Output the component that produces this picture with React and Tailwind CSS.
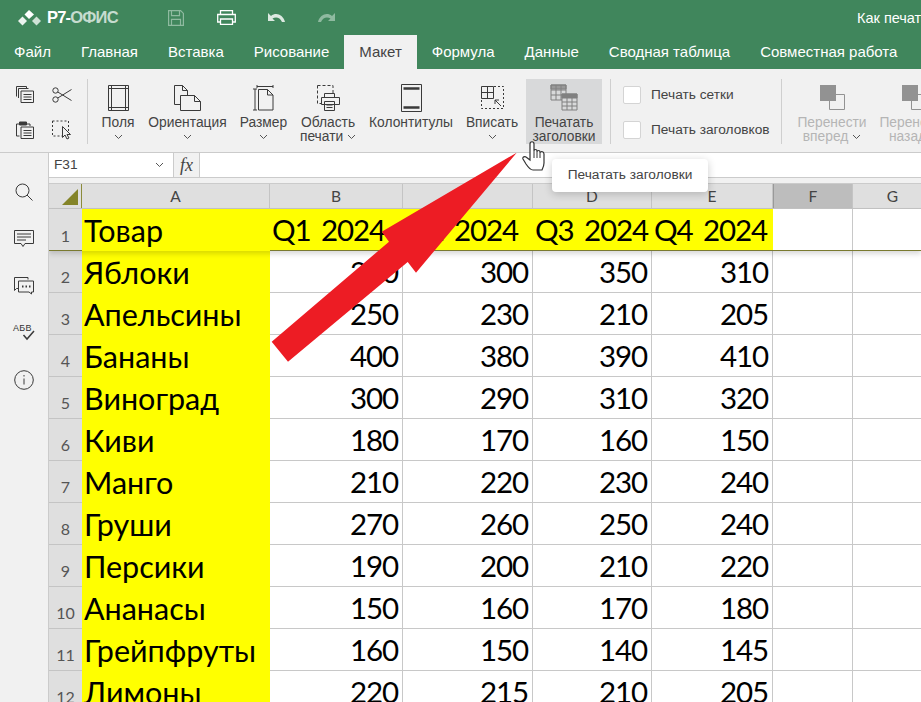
import React from "react";

const ui = "font-['Liberation_Sans',Arial,sans-serif]";
const cols = [
  { name: "A", w: "w-[188px]" },
  { name: "B", w: "w-[133px]" },
  { name: "C", w: "w-[130px]" },
  { name: "D", w: "w-[119px]" },
  { name: "E", w: "w-[121px]" },
  { name: "F", w: "w-[80px]" },
  { name: "G", w: "w-[80px]" },
];

const rows = [
  ["Яблоки", "200", "300", "350", "310"],
  ["Апельсины", "250", "230", "210", "205"],
  ["Бананы", "400", "380", "390", "410"],
  ["Виноград", "300", "290", "310", "320"],
  ["Киви", "180", "170", "160", "150"],
  ["Манго", "210", "220", "230", "240"],
  ["Груши", "270", "260", "250", "240"],
  ["Персики", "190", "200", "210", "220"],
  ["Ананасы", "150", "160", "170", "180"],
  ["Грейпфруты", "160", "150", "140", "145"],
  ["Лимоны", "220", "215", "210", "205"],
];

const tabs = ["Файл", "Главная", "Вставка", "Рисование", "Макет", "Формула", "Данные", "Сводная таблица", "Совместная работа"];

function Chevron() {
  return (
    <svg width="9" height="6" viewBox="0 0 9 6" className="inline-block">
      <path d="M1 1l3.500 3.500L8 1" fill="none" stroke="#555" strokeWidth="1" />
    </svg>
  );
}

function Tool({ icon, label, second, chevron, w, active }) {
  return (
    <div className={`${w} h-[65px] shrink-0 flex flex-col items-center ${active ? "bg-[#d8d9da]" : ""}`}>
      <div className="h-[37px] flex items-center justify-center">{icon}</div>
      <div className="text-[13.800px] leading-[14px] text-[#444] whitespace-nowrap text-center">{label}</div>
      <div className="text-[13.800px] leading-[14px] text-[#444] whitespace-nowrap text-center h-[14px]">
        {second} {chevron && <Chevron />}
      </div>
    </div>
  );
}

function Sep() {
  return <div className="w-px h-[65px] bg-[#cfcfcf] shrink-0" />;
}

const stroke = { fill: "none", stroke: "#3a3a3a", strokeWidth: 1 };

function SideIcon({ children }) {
  return <div className="h-[47px] flex items-center justify-center">{children}</div>;
}

function Sidebar() {
  return (
    <div className="w-[49px] shrink-0 bg-[#f1f1f1] border-r border-[#cbcbcb] flex flex-col pt-[15px]">
      <SideIcon>
        <svg width="18" height="18" viewBox="0 0 18 18" {...stroke}>
          <circle cx="7.500" cy="7.500" r="6.500" />
          <path d="M12 12l5.500 5.500" />
        </svg>
      </SideIcon>
      <SideIcon>
        <svg width="20" height="18" viewBox="0 0 20 18" {...stroke}>
          <path d="M.5.500h19v13H11l-2 3-2-3H.5z" />
          <path d="M3 4h14M3 7h14M3 10h9" />
        </svg>
      </SideIcon>
      <SideIcon>
        <svg width="20" height="18" viewBox="0 0 20 18" {...stroke}>
          <path d="M14 2.500V.5H.5v13l2-2H4" />
          <path d="M4.500 4h15v11h-2v2l-2.500-2H4.500z" />
          <path d="M8 9.500h1.500M11.500 9.500H13M15 9.500h1.500" strokeWidth="2" />
        </svg>
      </SideIcon>
      <SideIcon>
        <div className="relative w-[22px] h-[18px]">
          <span className="absolute left-0 -top-[1px] text-[9px] leading-[10px] tracking-[0.3px] text-[#333]">АБВ</span>
          <svg width="22" height="18" viewBox="0 0 22 18" className="absolute left-0 top-0" {...stroke}>
            <path d="M10.500 11l3.500 4 7-8" strokeWidth="1.500" />
          </svg>
        </div>
      </SideIcon>
      <SideIcon>
        <svg width="20" height="20" viewBox="0 0 20 20" {...stroke}>
          <circle cx="10" cy="10" r="9.300" />
          <path d="M10 8.500v6M10 5v1.500" />
        </svg>
      </SideIcon>
    </div>
  );
}

function Toolbar() {
  return (
    <div className="h-[84px] bg-[#f1f1f1] border-b border-[#cbcbcb] flex items-start pt-[10px] overflow-hidden">
      <div className="w-[87px] shrink-0 grid grid-cols-[37px_37px] grid-rows-[35px_35px] pl-[6px] -mt-[2px] place-items-center">
        <svg width="18" height="17" viewBox="0 0 18 17" {...stroke}>
          <path d="M.5 10.500V.5h10v2M2.500 12V2.500h10" />
          <path d="M5 5h12.500v11.500H5z" />
          <path d="M7.500 8.500h8M7.500 11h8M7.500 13.500h8" />
        </svg>
        <svg width="20" height="16" viewBox="0 0 20 16" {...stroke}>
          <circle cx="3.500" cy="3.500" r="2.700" />
          <circle cx="3.500" cy="12.500" r="2.700" />
          <path d="M5.800 5L19.500 13.500M5.800 11L19.500 2.500" />
        </svg>
        <svg width="18" height="18" viewBox="0 0 18 18" {...stroke}>
          <path d="M3.500 3H.5v12h3M11 3h3v2" />
          <path d="M3.500 1h7v3h-7z" fill="#3a3a3a" />
          <path d="M5 6h12.500v11.500H5z" />
          <path d="M7.500 9.500h8M7.500 12h8M7.500 14.500h8" />
        </svg>
        <svg width="20" height="20" viewBox="0 0 20 20" {...stroke}>
          <path d="M.5 1h16v15H.5z" strokeDasharray="2 2" />
          <path d="M10.500 6.500v11l2.500-2.500 2 4 2-1-2-3.500h3.500z" fill="#f1f1f1" />
        </svg>
      </div>
      <Sep />
      <div className="flex items-start pl-[7px]">
        <Tool w="w-[46px]" label="Поля" chevron icon={
          <svg width="21" height="26" viewBox="0 0 21 26" {...stroke}>
            <path d="M.5.500h20v25H.5zM3.500.5v25M17.500.5v25M.5 3.500h20M.5 22.500h20" />
          </svg>} />
        <Tool w="w-[93px]" label="Ориентация" chevron icon={
          <svg width="27" height="26" viewBox="0 0 27 26" {...stroke}>
            <path d="M.5.500h8l5 5v5M.5.500v19h6M8.500.5v5h5" />
            <path d="M6.500 10.500h14l6 6v9h-20zM20.500 10.500v6h6" />
          </svg>} />
        <Tool w="w-[59px]" label="Размер" chevron icon={
          <svg width="21" height="26" viewBox="0 0 21 26" {...stroke}>
            <path d="M4 1.500h16M4 0v3M20 0v3M2 4v21M0 4h4M0 25h4" />
            <path d="M5.500 4.500h9l5.500 5.500v15h-14.500zM14.500 4.500V10H20" />
          </svg>} />
        <Tool w="w-[70px]" label="Область" second="печати" chevron icon={
          <svg width="23" height="26" viewBox="0 0 23 26" {...stroke}>
            <path d="M.5.500H16V8M.5.500v18h4" strokeDasharray="3 2" />
            <path d="M7.500 8.500h10v4h-10zM4.500 12.500h18v7h-18zM7.500 16.500h10v9h-10zM9.500 20h6M9.500 22.500h6" fill="#f1f1f1" />
          </svg>} />
        <Tool w="w-[96px]" label="Колонтитулы" icon={
          <svg width="21" height="28" viewBox="0 0 21 28" {...stroke}>
            <path d="M.5.500h20v27H.5z" />
            <path d="M2.500 4.500h16M2.500 23.500h16" strokeWidth="2.500" />
          </svg>} />
        <Tool w="w-[66px]" label="Вписать" chevron icon={
          <svg width="23" height="23" viewBox="0 0 23 23" {...stroke}>
            <path d="M.5.500h12v12H.5zM6.500.5v12M.5 6.500h12" />
            <path d="M13 .5h9.500v22H.5V13" strokeDasharray="2 2" />
            <path d="M20 20l-6-6M14 18v-4h4" />
          </svg>} />
        <div className="ml-[1px]">
          <Tool w="w-[76px]" active label="Печатать" second="заголовки" icon={
            <svg width="28" height="27" viewBox="0 0 28 27" fill="none" stroke="#808080" strokeWidth="1">
              <path d="M1 1h15v4H1z" fill="#999" />
              <path d="M1 1h15v15H1zM6 1v15M11 1v15M1 6h15M1 11h15" />
              <path d="M12 10h15v16H12z" fill="#d8d9da" />
              <path d="M12 10h15v4H12z" fill="#808080" />
              <path d="M17 14v12M22 14v12M12 18h15M12 22h15" />
            </svg>} />
        </div>
      </div>
      <div className="ml-[8px]"><Sep /></div>
      <div className="w-[170px] shrink-0 pl-[12px] flex flex-col gap-[17px] pt-[7px] text-[13.700px] leading-[18px] text-[#444]">
        <label className="flex items-center gap-[10px] whitespace-nowrap">
          <span className="w-[18px] h-[18px] rounded-[2px] bg-white border border-[#d4d4d4]" />Печать сетки
        </label>
        <label className="flex items-center gap-[10px] whitespace-nowrap">
          <span className="w-[18px] h-[18px] rounded-[2px] bg-white border border-[#d4d4d4]" />Печать заголовков
        </label>
      </div>
      <Sep />
      <div className="flex pl-[9px] text-[#b5b5b5]">
        {[["Перенести", "вперед"], ["Перенести", "назад"]].map(([a, b]) => (
          <div key={b} className="w-[82px] shrink-0 h-[65px] flex flex-col items-center text-[13.800px] leading-[14px]">
            <div className="h-[37px] flex items-center justify-center">
              <svg width="25" height="25" viewBox="0 0 25 25">
                <path d="M0 0h16v16H0z" fill="#929292" />
                <path d="M16 9.500h8.500v15H9.500V16" fill="none" stroke="#929292" strokeWidth="1" />
              </svg>
            </div>
            <div className="whitespace-nowrap">{a}</div>
            <div className="whitespace-nowrap">{b} <Chevron /></div>
          </div>
        ))}
      </div>
    </div>
  );
}

function Grid() {
  return (
    <div className="flex-1 min-w-0 overflow-hidden">
      <div className="h-[25px] flex bg-white border-b border-[#cbcbcb]">
        <div className="w-[125px] border-r border-[#cbcbcb] flex items-center justify-between pl-[5px] pr-[9px] text-[13.700px] text-[#444]">
          F31 <Chevron />
        </div>
        <div className="w-[26px] bg-[#f1f1f1] border-r border-[#cbcbcb] flex items-center justify-center font-['Liberation_Serif',serif] italic text-[18px] text-[#444]">fx</div>
      </div>
      <div className="h-[6px] bg-[#f1f1f1] border-b border-[#cbcbcb]" />
      <div className="h-[25px] flex bg-[#dfdfdf] border-b border-[#c4c4c4] font-['Lato',sans-serif] text-[15.500px] text-[#444]">
        <div className="w-[33px] shrink-0 border-r border-[#8b8b3b] flex items-end justify-end pr-[3px] pb-[3px]">
          <svg width="16" height="16" viewBox="0 0 16 16"><path d="M16 0v16H0z" fill="#848428" /></svg>
        </div>
        {cols.map((c) => (
          <div key={c.name} className={`${c.w} shrink-0 flex items-center justify-center pt-[1px] border-r border-[#c4c4c4] ${c.name === "F" ? "bg-[#bdbdbd] border-l border-l-[#999]" : ""}`}>{c.name}</div>
        ))}
      </div>
      <div className="h-[42px] flex border-b border-[#7a7a30] shadow-[0_3px_5px_rgba(0,0,0,0.15)] relative z-10">
        <div className="w-[33px] shrink-0 bg-[#dfdfdf] pt-[17px] text-center font-['Lato',sans-serif] text-[16px] leading-[20px] text-[#555]">1</div>
        <Row cells={["Товар", "Q1 2024", "Q2 2024", "Q3 2024", "Q4 2024"]} header />
      </div>
      {rows.map((r, i) => (
        <div key={r[0]} className="h-[42px] flex">
          <div className="w-[33px] shrink-0 bg-[#dfdfdf] border-b border-[#c4c4c4] pt-[16px] text-center font-['Lato',sans-serif] text-[16px] leading-[20px] text-[#555]">{i + 2}</div>
          <Row cells={r} />
        </div>
      ))}
    </div>
  );
}

function Row({ cells, header }) {
  return (
    <>
      {cols.map((c, i) => {
        const v = cells[i];
        const yellow = header ? i < 5 : i === 0;
        const left = header || i === 0;
        const digits = i > 0;
        return (
          <div
            key={c.name}
            className={`${c.w} shrink-0 pl-[2px] pr-[4px] flex items-center whitespace-nowrap overflow-visible font-['Lato',sans-serif] leading-[40px] text-black
              ${digits ? "text-[29.500px] tracking-[-1.100px] [word-spacing:4px]" : "text-[30.500px] -mb-px"}
              ${left ? "justify-start" : "justify-end"}
              ${yellow ? "bg-[#ffff00]" : "bg-white"}
              ${header ? "" : yellow ? "border-b border-[#ffff00]" : "border-b border-r border-[#c8c8c8]"}
              ${header && !yellow ? "border-r border-[#c8c8c8]" : ""}`}
          >
            {v}
          </div>
        );
      })}
    </>
  );
}

export default function App() {
  return (
    <div className={`${ui} w-[921px] h-[702px] overflow-hidden relative bg-white`}>
      <div className="h-[35px] bg-[#40865c] flex items-center text-white relative">
        <div className="pl-[18px] flex items-center w-[168px] shrink-0 gap-[6px]">
          <svg width="23" height="16" viewBox="0 0 23 16" fill="#fff">
            <path d="M0 11l4.500-4.500L9 11l-4.500 4.500z" opacity="0.9" />
            <path d="M6.500 4.500L11 0l5 4.500L11 9z" />
            <path d="M14 11l4.500-4.500L23 11l-4.500 4.500z" opacity="0.75" />
          </svg>
          <span className="font-bold text-[16.500px] tracking-[-0.800px]">Р7-<span className="text-[#c6dccf]">ОФИС</span></span>
        </div>
        <svg width="16" height="16" viewBox="0 0 16 16" fill="none" stroke="#8fbaa0" strokeWidth="1.200">
          <path d="M.6.6h12l2.800 2.800v12H.6zM3.500.6v5h8v-5M3.500 15.400v-6h9v6" />
        </svg>
        <svg width="19" height="15" viewBox="0 0 19 15" fill="none" stroke="#fff" strokeWidth="1.300" className="ml-[33px]">
          <path d="M3.500 4.500V.7h12v3.800M3.500 12H.7V4.500h17.600V12h-2.800M3.500 9h12v5.300h-12z" />
        </svg>
        <svg width="17" height="9" viewBox="0 0 17 9" fill="#dce9e1" className="ml-[32px]">
          <path d="M0 0v8h7L4.500 5.500C7.500 3.500 12 4 14 9h3C15 1.500 8 -1 3 3z" />
        </svg>
        <svg width="17" height="9" viewBox="0 0 17 9" fill="#8fbaa0" className="ml-[33px]">
          <path d="M17 0v8h-7l2.500-2.500C9.500 3.500 5 4 3 9H0C2 1.500 9 -1 14 3z" />
        </svg>
        <span className="absolute left-[857px] top-[9px] text-[14.500px] leading-[18px] whitespace-nowrap">Как печатать заголовки</span>
      </div>
      <div className="h-[34px] bg-[#40865c] flex items-end -ml-px text-[15px] text-white">
        {tabs.map((t) => (
          <div key={t} className={`h-[34px] px-[15px] flex items-center whitespace-nowrap ${t === "Макет" ? "bg-[#f1f1f1] text-[#444]" : ""}`}>{t}</div>
        ))}
      </div>
      <Toolbar />
      <div className="flex h-[549px]">
        <Sidebar />
        <Grid />
      </div>

      <svg width="921" height="702" viewBox="0 0 921 702" className="absolute left-0 top-0 pointer-events-none z-20">
        <polygon points="516.700,152.700 381.700,231.700 389,241.700 271.700,341.700 288,361.700 407.700,262 416,272.700" fill="#ed1c24" />
        <path d="M530 144c0-3 4-3 4 0v7c0-2 3-2 3 0v1c0-2 3-2 3 0v1c0-2 4-2 4 1v9c0 3-1 5-2 7h-9c-3 0-5-3-7-6l-3-5c-1-2 2-3 3-2l4 3z" fill="#fff" stroke="#333" strokeWidth="1.200" />
        <path d="M534 151v7M537 152v6M540 153v5" fill="none" stroke="#333" strokeWidth="1" />
      </svg>
      <div className="absolute left-[552px] top-[159px] w-[156px] h-[33px] z-20 bg-white rounded-[4px] shadow-[0_2px_8px_rgba(0,0,0,0.2)] flex items-center justify-center text-[13.700px] text-[#444] whitespace-nowrap">Печатать заголовки</div>
    </div>
  );
}
